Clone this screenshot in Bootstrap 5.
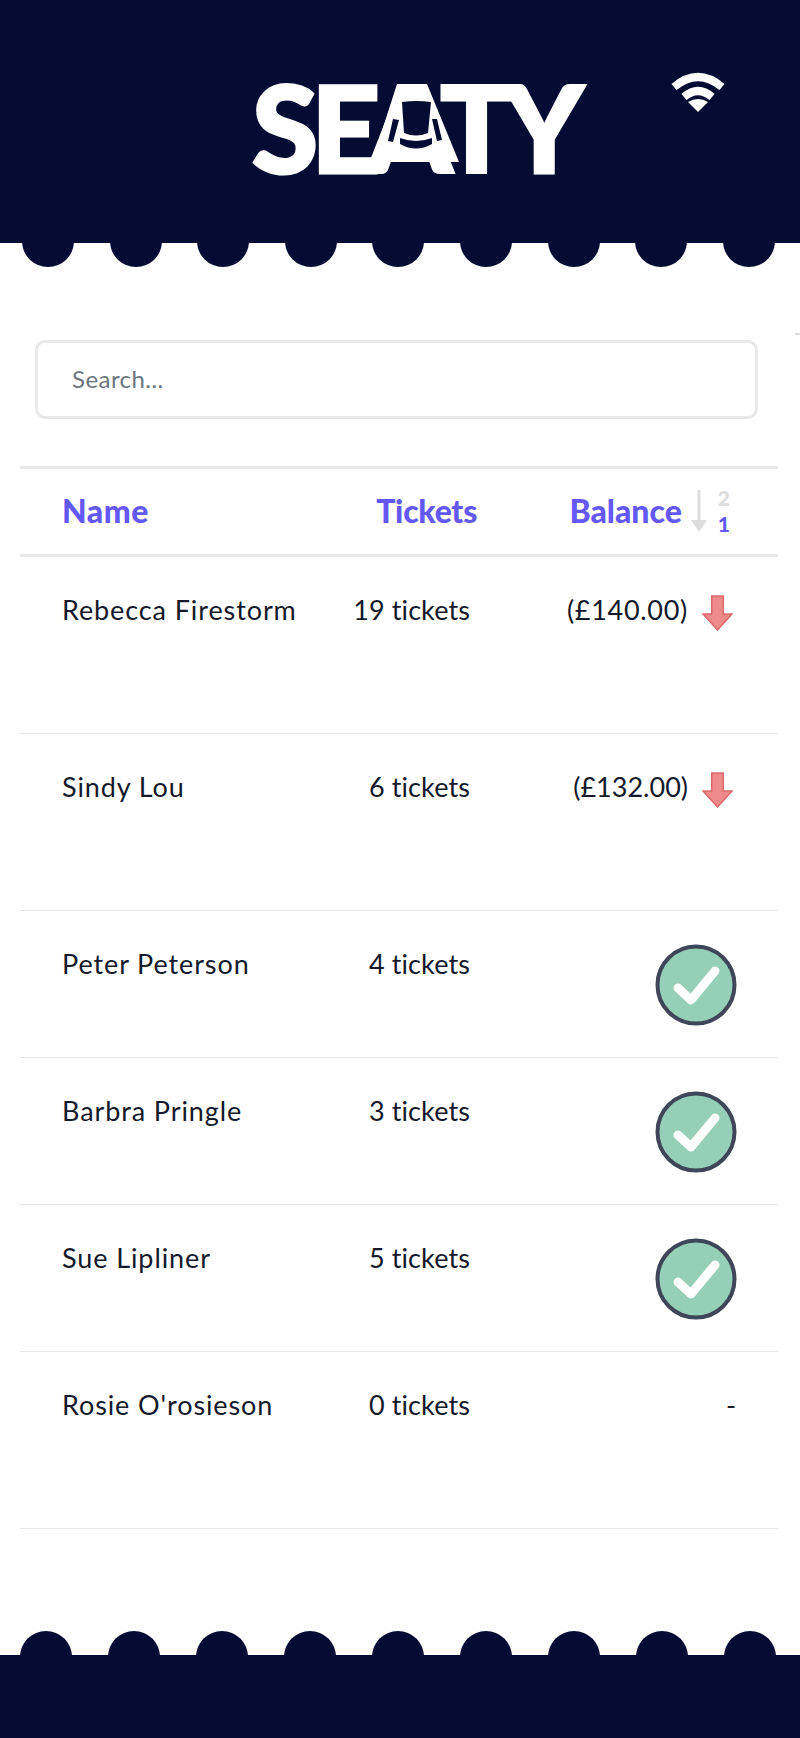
<!DOCTYPE html>
<html lang="en">
<head>
  <meta charset="UTF-8" />
  <meta name="viewport" content="width=device-width, initial-scale=1" />
  <title>Seaty</title>
  <link href="https://cdn.jsdelivr.net/npm/bootstrap@5.3.3/dist/css/bootstrap.min.css" rel="stylesheet">
  <style>
    body {
      font-family: Lato, "Liberation Sans", sans-serif;
      color: #14192b;
      background: #fff;
      position: relative;
    }
    .top-band {
      height: 243px;
      background: #040c33;
      position: relative;
    }
    .logo-box {
      position: absolute;
      left: 252px;
      top: 84px;
      width: 335px;
      height: 92px;
    }
    .logo-word {
      font-size: 120px;
      font-weight: 900;
      line-height: 92px;
      color: #fff;
      white-space: nowrap;
      font-kerning: none;
      -webkit-text-stroke: 3px #fff;
      paint-order: stroke;
      margin-top: -3px;
    }
    .logo-word .ltr-s { letter-spacing: -7px; }
    .logo-word .ltr-e { letter-spacing: -12px; }
    .logo-word .ltr-a { letter-spacing: -12px; }
    .logo-word .ltr-t { letter-spacing: -8px; }
    .logo-seat {
      position: absolute;
      left: 0;
      top: 0;
      width: 335px;
      height: 92px;
    }
    .wifi-mark {
      position: absolute;
      left: 670px;
      top: 72px;
      width: 56px;
      height: 40px;
    }
    .scallops {
      height: 24px;
      overflow: hidden;
      gap: 35.6px;
      padding-left: 22px;
    }
    .scallops span {
      flex: none;
      width: 52px;
      height: 52px;
      border-radius: 50%;
      background: #040c33;
      margin-top: -28px;
    }
    .scallops-up {
      gap: 36px;
      padding-left: 20px;
    }
    .scallops-up span {
      margin-top: 0;
    }
    .bottom-band {
      height: 83px;
      background: #040c33;
    }
    .stray-mark {
      position: absolute;
      left: 795px;
      top: 333px;
      width: 5px;
      height: 2px;
      background: #ddd;
    }
    .search-wrap {
      margin: 73px 42px 0 35px;
    }
    .search-input {
      height: 79px;
      border: 3px solid #e8e8e8;
      border-radius: 10px;
      padding: 0 0 2px 34px;
      font-size: 24px;
      letter-spacing: .45px;
    }
    .search-input::placeholder {
      color: #6c757d;
    }
    .tix-table {
      margin: 47px 22px 0 20px;
      width: 758px;
      table-layout: fixed;
      border-collapse: collapse;
    }
    .tix-table th {
      height: 88px;
      border-top: 3px solid #e8e8e8;
      border-bottom: 3px solid #e8e8e8;
      color: #6358f5;
      font-size: 32px;
      font-weight: 900;
      vertical-align: middle;
      padding: 0 0 1px;
    }
    .tix-table td {
      border-bottom: 1px solid #e8e8e8;
      font-size: 27px;
      line-height: 36px;
      vertical-align: top;
      padding: 35px 0 0;
    }
    .tix-table tbody tr { height: 147px; }
    .tix-table tbody tr.tall-row { height: 177px; }
    .tix-table tbody tr.first-row { height: 178px; }
    .col-name { width: 300px; }
    .tix-table .col-name { padding-left: 42px; }
    .tix-table td.col-name { letter-spacing: .9px; }
    .tix-table th.col-name { letter-spacing: .5px; }
    .col-tickets { width: 157px; text-align: right; }
    .tix-table th.col-tickets { letter-spacing: -.3px; }
    .tix-table td.col-tickets { padding-right: 7px; letter-spacing: .1px; }
    .col-balance { text-align: right; }
    .tix-table td.col-balance { padding-right: 42px; }
    .amount-wide { letter-spacing: .7px; }
    .sort-arrow { width: 18px; height: 43px; }
    .sort-digits {
      font-size: 21px;
      line-height: 26px;
      font-weight: 900;
      color: #ddd;
      margin-right: 48px;
      margin-left: 10px;
    }
    .sort-digits b { color: #6358f5; display: block; font-weight: 900; }
    .owe-arrow { width: 31px; height: 36px; margin: 3px 3px 0 14px; flex: none; }
    .paid-check { width: 82px; height: 82px; display: block; margin-left: auto; margin-right: -1px; margin-top: -2px; }
  </style>
</head>
<body class="d-flex flex-column min-vh-100">

<header class="top-band">
  <div class="logo-box">
    <div class="logo-word"><span class="ltr-s">S</span><span class="ltr-e">E</span><span class="ltr-a">A</span><span class="ltr-t">T</span><span>Y</span></div>
    <!-- filled A with the seat cut into it -->
    <svg class="logo-seat" viewBox="0 0 335 92" aria-hidden="true">
      <path d="M145 0 H175 L207 78 H120 Z" fill="#fff"/>
      <path d="M150 18 Q164 16 179 18 L176 49 Q164 54 152 49 Z" fill="#040c33"/>
      <path d="M148 54 Q164 60 180 54 L180 60 Q164 69 148 60 Z" fill="#040c33"/>
      <path d="M141 35 L147 36 L141 58 L136 57 Z" fill="#040c33"/>
      <path d="M180 35 L185 35 L190 56 L185 57 Z" fill="#040c33"/>
    </svg>
  </div>
  <svg class="wifi-mark" viewBox="0 0 56 40" aria-hidden="true">
    <path d="M4 15 Q28 -5 52 15" fill="none" stroke="#fff" stroke-width="8"/>
    <path d="M14 25 Q28 13 42 25" fill="none" stroke="#fff" stroke-width="8"/>
    <path d="M28 40 L18 30 Q28 24 38 30 Z" fill="#fff"/>
  </svg>
</header>
<div class="scallops d-flex">
  <span></span><span></span><span></span><span></span><span></span><span></span><span></span><span></span><span></span>
</div>

<div class="stray-mark"></div>

<main class="flex-grow-1">
  <div class="search-wrap">
    <input type="text" class="form-control search-input" placeholder="Search...">
  </div>

  <table class="tix-table">
    <thead>
      <tr>
        <th class="col-name">Name</th>
        <th class="col-tickets">Tickets</th>
        <th class="col-balance">
          <div class="d-flex justify-content-end align-items-center">
            <span>Balance</span>
            <svg class="sort-arrow ms-2" viewBox="0 0 18 43" aria-hidden="true">
              <path d="M9 0 V32" stroke="#ddd" stroke-width="3" fill="none"/>
              <path d="M1 30 H17 L9 42 Z" fill="#ddd"/>
            </svg>
            <span class="sort-digits">2<b>1</b></span>
          </div>
        </th>
      </tr>
    </thead>
    <tbody>
      <tr class="first-row">
        <td class="col-name">Rebecca Firestorm</td>
        <td class="col-tickets">19 tickets</td>
        <td class="col-balance">
          <div class="d-flex justify-content-end align-items-start">
            <span class="amount-wide">(£140.00)</span>
            <svg class="owe-arrow" viewBox="0 0 32 38" preserveAspectRatio="none" aria-hidden="true"><path d="M10 1 H22 V20 H31 L16 37 L1 20 H10 Z" fill="#ee8a8a" stroke="#d9686c" stroke-width="1.5"/></svg>
          </div>
        </td>
      </tr>
      <tr class="tall-row">
        <td class="col-name">Sindy Lou</td>
        <td class="col-tickets">6 tickets</td>
        <td class="col-balance">
          <div class="d-flex justify-content-end align-items-start">
            <span>(£132.00)</span>
            <svg class="owe-arrow" viewBox="0 0 32 38" preserveAspectRatio="none" aria-hidden="true"><path d="M10 1 H22 V20 H31 L16 37 L1 20 H10 Z" fill="#ee8a8a" stroke="#d9686c" stroke-width="1.5"/></svg>
          </div>
        </td>
      </tr>
      <tr>
        <td class="col-name">Peter Peterson</td>
        <td class="col-tickets">4 tickets</td>
        <td class="col-balance">
          <svg class="paid-check" viewBox="0 0 82 82" aria-hidden="true"><circle cx="41" cy="41" r="38.5" fill="#95cfb7" stroke="#3f4657" stroke-width="4"/><path d="M23 44 L36 56 L60 27" fill="none" stroke="#fff" stroke-width="9" stroke-linecap="round" stroke-linejoin="round"/></svg>
        </td>
      </tr>
      <tr>
        <td class="col-name">Barbra Pringle</td>
        <td class="col-tickets">3 tickets</td>
        <td class="col-balance">
          <svg class="paid-check" viewBox="0 0 82 82" aria-hidden="true"><circle cx="41" cy="41" r="38.5" fill="#95cfb7" stroke="#3f4657" stroke-width="4"/><path d="M23 44 L36 56 L60 27" fill="none" stroke="#fff" stroke-width="9" stroke-linecap="round" stroke-linejoin="round"/></svg>
        </td>
      </tr>
      <tr>
        <td class="col-name">Sue Lipliner</td>
        <td class="col-tickets">5 tickets</td>
        <td class="col-balance">
          <svg class="paid-check" viewBox="0 0 82 82" aria-hidden="true"><circle cx="41" cy="41" r="38.5" fill="#95cfb7" stroke="#3f4657" stroke-width="4"/><path d="M23 44 L36 56 L60 27" fill="none" stroke="#fff" stroke-width="9" stroke-linecap="round" stroke-linejoin="round"/></svg>
        </td>
      </tr>
      <tr class="tall-row">
        <td class="col-name">Rosie O'rosieson</td>
        <td class="col-tickets">0 tickets</td>
        <td class="col-balance">-</td>
      </tr>
    </tbody>
  </table>
</main>

<div class="scallops scallops-up d-flex">
  <span></span><span></span><span></span><span></span><span></span><span></span><span></span><span></span><span></span>
</div>
<footer class="bottom-band"></footer>

<script src="https://cdn.jsdelivr.net/npm/bootstrap@5.3.3/dist/js/bootstrap.bundle.min.js"></script>
</body>
</html>
